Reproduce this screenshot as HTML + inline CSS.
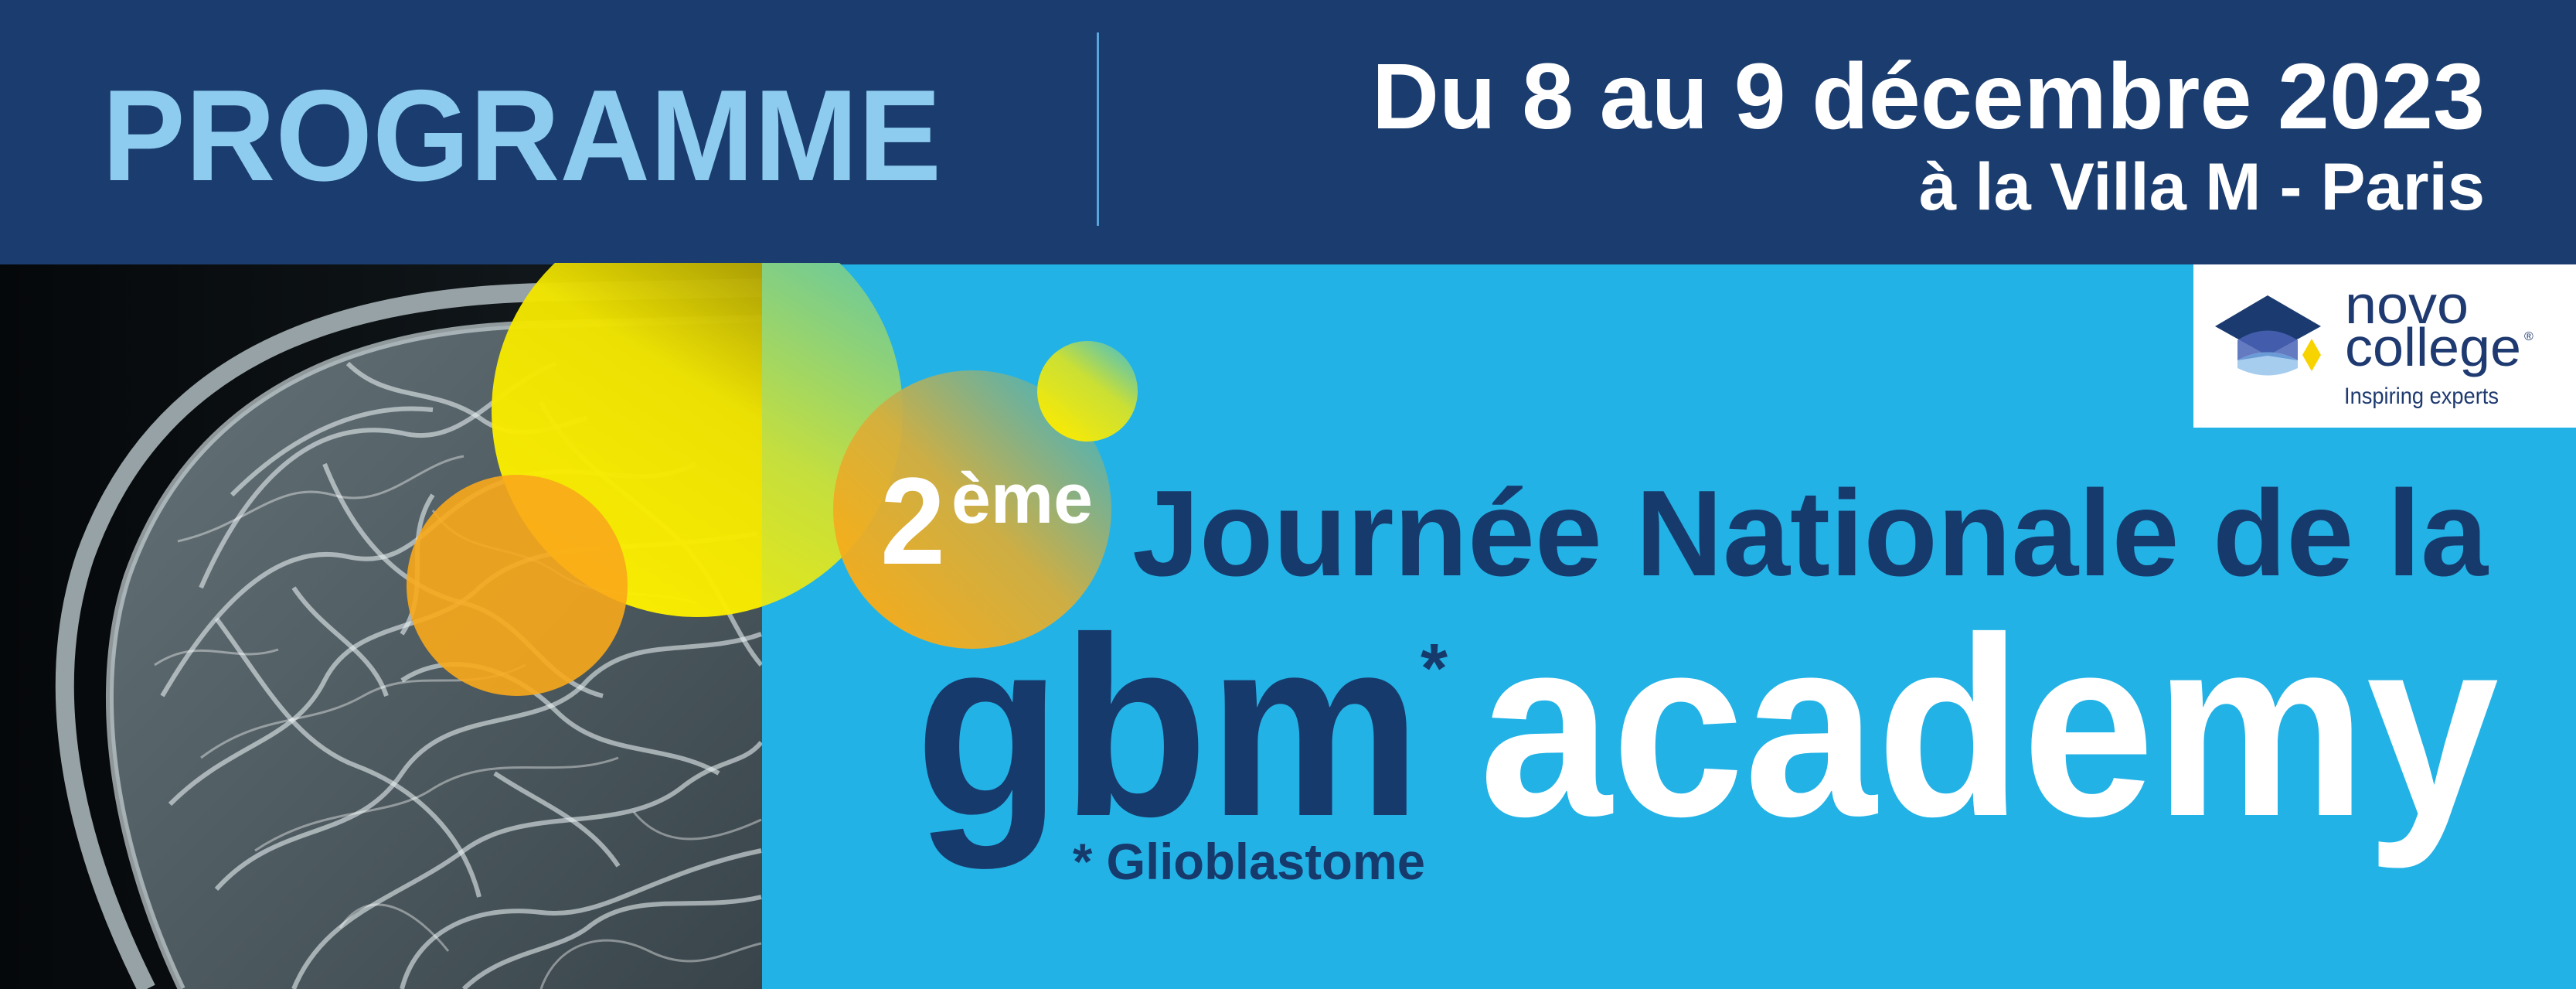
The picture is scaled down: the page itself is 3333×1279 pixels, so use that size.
<!DOCTYPE html>
<html><head><meta charset="utf-8">
<style>
html,body{margin:0;padding:0;background:#23b2e6;}
svg{display:block;}
text{font-family:"Liberation Sans",sans-serif;}
</style></head>
<body>
<svg width="3333" height="1279" viewBox="0 0 3333 1279" xmlns="http://www.w3.org/2000/svg">
<defs>
 <linearGradient id="bg" x1="0" y1="0" x2="1" y2="0"><stop offset="0" stop-color="#05080a"/><stop offset="1" stop-color="#151c20"/></linearGradient>
 <linearGradient id="brainfill" x1="0" y1="0" x2="1" y2="1"><stop offset="0" stop-color="#66747a"/><stop offset="0.6" stop-color="#4a575d"/><stop offset="1" stop-color="#38444a"/></linearGradient>
 <linearGradient id="yelB" x1="0.2" y1="1" x2="0.8" y2="0"><stop offset="0" stop-color="#fff200"/><stop offset="0.55" stop-color="#f0e400"/><stop offset="1" stop-color="#8a7c08"/></linearGradient>
 <linearGradient id="yelG" x1="0.2" y1="1" x2="0.8" y2="0"><stop offset="0" stop-color="#f7ec00"/><stop offset="0.5" stop-color="#c6df3c"/><stop offset="1" stop-color="#62c7a6"/></linearGradient>
 <linearGradient id="or2" x1="0.15" y1="0.85" x2="0.85" y2="0.15"><stop offset="0" stop-color="#f9ac17"/><stop offset="0.5" stop-color="#d6ae3c"/><stop offset="1" stop-color="#5fb2a8"/></linearGradient>
 <linearGradient id="sm" x1="0.2" y1="0.9" x2="0.8" y2="0.1"><stop offset="0" stop-color="#fdec00"/><stop offset="0.6" stop-color="#d4e22a"/><stop offset="1" stop-color="#6cc9a0"/></linearGradient>
 <clipPath id="left"><rect x="0" y="340" width="986" height="939"/></clipPath>
 <clipPath id="right"><rect x="986" y="340" width="2347" height="939"/></clipPath>
</defs>

<rect x="0" y="0" width="3333" height="342" fill="#1a3c6e"/>
<text x="132" y="233" font-size="168" font-weight="bold" fill="#8dcbef" textLength="1086" lengthAdjust="spacingAndGlyphs">PROGRAMME</text>
<rect x="1419" y="42" width="3" height="250" fill="#5aa6dc"/>
<text x="1775" y="166" font-size="121" font-weight="bold" fill="#ffffff" textLength="1440" lengthAdjust="spacingAndGlyphs">Du 8 au 9 décembre 2023</text>
<text x="2483" y="271" font-size="86" font-weight="bold" fill="#ffffff" textLength="732" lengthAdjust="spacingAndGlyphs">à la Villa M - Paris</text>

<rect x="986" y="342" width="2347" height="937" fill="#23b2e6"/>

<rect x="0" y="342" width="986" height="937" fill="url(#bg)"/>
<g clip-path="url(#left)">
 <path d="M190,1279 C100,1100 50,900 110,720 C200,470 420,385 700,378 L990,372" fill="none" stroke="#97a2a6" stroke-width="24"/>
 <path d="M235,1279 C150,1100 115,900 165,745 C250,505 460,428 680,420 L990,412 L990,1279 Z" fill="url(#brainfill)"/>
 <path d="M235,1279 C150,1100 115,900 165,745 C250,505 460,428 680,420 L990,412" fill="none" stroke="#c9d3d6" stroke-opacity="0.7" stroke-width="10"/>
 <g fill="none" stroke="#e6eef0" stroke-opacity="0.6" stroke-width="6">
  <path d="M260,760 C330,600 420,540 520,560 C600,580 640,500 720,470"/>
  <path d="M210,900 C280,780 360,700 450,720 C540,740 560,650 660,620 C760,590 820,640 900,600"/>
  <path d="M220,1040 C300,960 380,960 420,880 C460,800 560,820 620,760 C700,690 800,720 980,690"/>
  <path d="M280,1150 C360,1060 460,1090 520,1000 C580,910 700,950 760,880 C820,820 900,850 985,820"/>
  <path d="M380,1279 C420,1180 520,1160 600,1100 C680,1040 800,1080 880,1020 C930,980 960,990 985,960"/>
  <path d="M520,1279 C540,1200 620,1170 700,1180 C780,1190 840,1130 985,1100"/>
  <path d="M600,1279 C650,1230 720,1230 760,1200 C820,1150 900,1180 985,1160"/>
  <path d="M300,640 C380,560 470,520 560,530"/>
  <path d="M420,600 C460,700 520,760 600,780 C680,800 700,880 780,900"/>
  <path d="M280,800 C340,880 380,960 460,990 C540,1020 600,1080 620,1160"/>
  <path d="M700,520 C740,600 820,640 880,700 C930,750 950,820 985,860"/>
  <path d="M520,880 C580,840 660,860 720,920 C780,980 860,960 930,1000"/>
  <path d="M380,760 C420,820 480,840 500,900"/>
  <path d="M640,1000 C700,1040 760,1060 800,1120"/>
  <path d="M450,470 C500,520 560,500 620,540 C660,570 700,560 760,540"/>
  <path d="M560,640 C520,700 560,760 520,820"/>
 </g>
 <g fill="none" stroke="#ffffff" stroke-opacity="0.4" stroke-width="3">
  <path d="M230,700 C320,680 360,620 430,640 C500,660 540,600 600,590"/>
  <path d="M260,980 C340,920 400,940 470,900 C540,860 600,900 680,860"/>
  <path d="M330,1100 C420,1040 500,1060 560,1020 C640,970 720,1010 800,980"/>
  <path d="M700,1279 C720,1220 780,1200 840,1230 C900,1260 940,1230 985,1220"/>
  <path d="M560,660 C600,720 660,700 720,740 C780,780 840,760 900,780"/>
  <path d="M200,860 C260,820 300,860 360,840"/>
  <path d="M440,1200 C480,1140 540,1180 580,1230"/>
  <path d="M820,1050 C860,1100 920,1090 985,1060"/>
 </g>
 <circle cx="902" cy="532" r="266" fill="url(#yelB)" opacity="0.97"/>
 <circle cx="669" cy="757" r="143" fill="#f9a91a" opacity="0.9"/>
</g>
<g clip-path="url(#right)">
 <circle cx="902" cy="532" r="266" fill="url(#yelG)"/>
 <circle cx="1258" cy="659" r="180" fill="url(#or2)" opacity="0.95"/>
 <circle cx="1407" cy="506" r="65" fill="url(#sm)" opacity="0.95"/>
</g>

<text x="1139" y="729" font-size="160" font-weight="bold" fill="#ffffff" textLength="84" lengthAdjust="spacingAndGlyphs">2</text>
<text x="1231" y="676" font-size="92" font-weight="bold" fill="#ffffff" textLength="183" lengthAdjust="spacingAndGlyphs">ème</text>
<text x="1465" y="744" font-size="158" font-weight="bold" fill="#173a6c" textLength="1754" lengthAdjust="spacingAndGlyphs">Journée Nationale de la</text>
<text x="1184" y="1054" font-size="330" font-weight="bold" fill="#173a6c" textLength="655" lengthAdjust="spacingAndGlyphs">gbm</text>
<text x="1838" y="895" font-size="90" font-weight="bold" fill="#173a6c">*</text>
<text x="1914" y="1054" font-size="330" font-weight="bold" fill="#ffffff" textLength="1319" lengthAdjust="spacingAndGlyphs">academy</text>
<text x="1388" y="1137" font-size="66" font-weight="bold" fill="#173a6c" textLength="456" lengthAdjust="spacingAndGlyphs">* Glioblastome</text>

<rect x="2838" y="342" width="495" height="211" fill="#ffffff"/>
<path d="M2866,422 L2934,382 L3003,422 L2934,460 Z" fill="#1b3b70"/>
<path d="M2895,440 Q2934,415 2973,440 L2973,466 Q2934,445 2895,466 Z" fill="#4a64b6" opacity="0.85"/>
<path d="M2895,466 Q2934,445 2973,466 L2973,476 Q2934,495 2895,476 Z" fill="#a6cdee"/>
<path d="M2895,466 Q2934,445 2973,466 L2934,460 Z" fill="#5c8fcf" opacity="0.8"/>
<path d="M2979,459 L2991,438 L3003,459 L2991,480 Z" fill="#f7d300"/>
<text x="3034" y="418" font-size="70" fill="#1e3a70" textLength="160" lengthAdjust="spacingAndGlyphs">novo</text>
<text x="3034" y="473" font-size="70" fill="#1e3a70" textLength="228" lengthAdjust="spacingAndGlyphs">college</text>
<text x="3266" y="440" font-size="16" fill="#1e3a70">®</text>
<text x="3033" y="522" font-size="30" fill="#1e3a70" textLength="200" lengthAdjust="spacingAndGlyphs">Inspiring experts</text>
</svg>
</body></html>
